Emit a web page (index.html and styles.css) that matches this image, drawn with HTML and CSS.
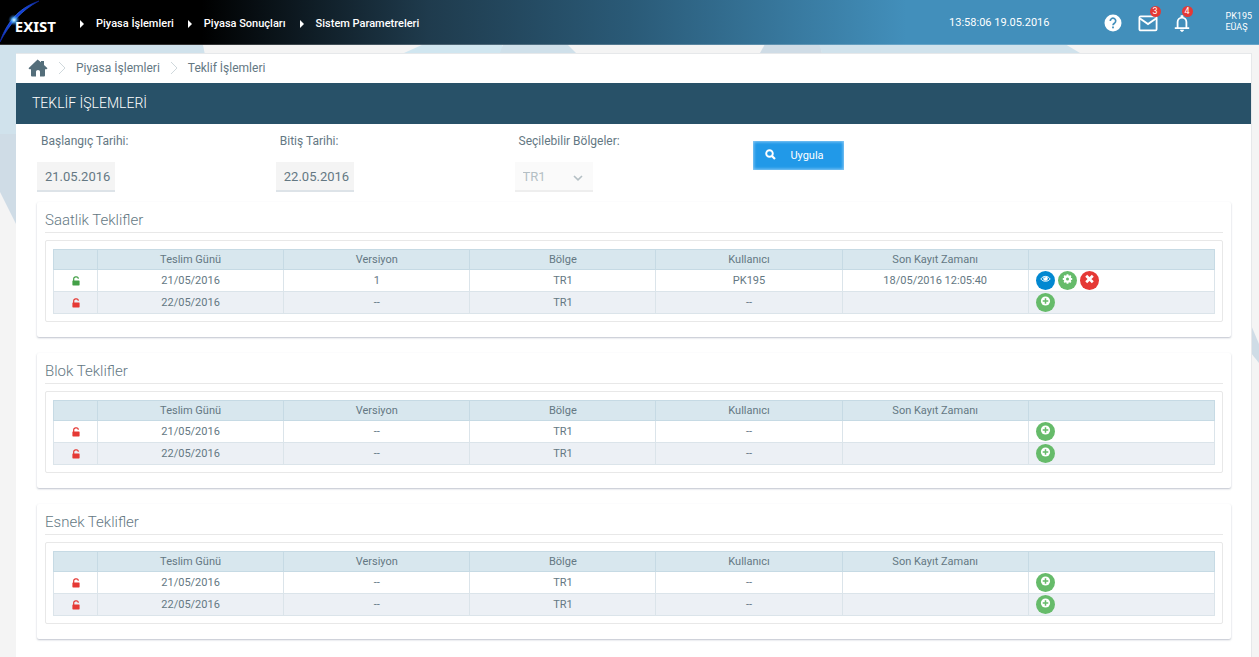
FILE: index.html
```html
<!DOCTYPE html>
<html lang="tr">
<head>
<meta charset="utf-8">
<title>Teklif İşlemleri</title>
<link rel="stylesheet" href="styles.css">
</head>
<body>
<svg class="defs" aria-hidden="true">
  <symbol id="unlock" viewBox="0 0 8 10"><path d="M1.700 5V2.800a1.900 1.900 0 0 1 1.900-1.900h.8a1.900 1.900 0 0 1 1.900 1.900" fill="none" stroke="currentColor" stroke-width="1.200"/><rect x="0.400" y="4.400" width="7.200" height="5" rx=".6" fill="currentColor"/></symbol>
  <symbol id="plus" viewBox="0 0 10 10"><circle cx="5" cy="5" r="4.600" fill="#fff"/><path d="M5 2.200v5.600M2.200 5h5.600" stroke="#66bb6a" stroke-width="1.500"/></symbol>
  <symbol id="eye" viewBox="0 0 12 10"><path d="M.9 5C3.200 1.200 8.800 1.200 11.100 5 8.800 8.300 3.200 8.300.9 5z" fill="none" stroke="#fff" stroke-width="1"/><circle cx="6" cy="4.400" r="2.500" fill="#fff"/><path d="M4.600 4.200a1.400 1.400 0 0 1 1.400-1.300" fill="none" stroke="#0288d1" stroke-width=".6"/></symbol>
  <symbol id="gear" viewBox="0 0 10 10"><circle cx="5" cy="5" r="2.600" fill="none" stroke="#fff" stroke-width="2.200"/><path d="M5 .3v2M5 7.700v2M.3 5h2M7.700 5h2M1.700 1.700l1.400 1.400M6.900 6.900l1.400 1.400M1.700 8.300l1.400-1.400M6.900 3.100l1.400-1.400" stroke="#fff" stroke-width="1.900"/></symbol>
  <symbol id="cross" viewBox="0 0 10 10"><path d="M1.700 1.700l6.600 6.600M8.300 1.700L1.700 8.300" stroke="#fff" stroke-width="2.700"/></symbol>
</svg>
<svg class="backdrop" width="1259" height="657" aria-hidden="true">
  <path d="M0 40H202L206 60 220 134H0z" fill="#d0e2ec"/>
  <path d="M0 134H17V226L0 192z" fill="#cfdce6"/>
  <path d="M404 53L424 44H502V53z" fill="#d0e6f0"/>
  <path d="M500 53L503 44H567L576 53z" fill="#cfe0ea"/>
  <path d="M760 53L765 44H820L822 53z" fill="#cfdce6"/>
  <path d="M822 53L819 44H1065L1080 53z" fill="#d0e2ec"/>
  <path d="M1251 325L1259 344V363L1251 353z" fill="#cfdce6"/>
</svg>

<header class="topbar">
  <a class="logo" href="#" aria-label="EXIST">
    <svg class="arc" viewBox="0 0 44 45" aria-hidden="true">
      <defs>
        <linearGradient id="beam" x1="0" y1="1" x2="1" y2="0"><stop offset="0" stop-color="#0a1a90"/><stop offset=".5" stop-color="#3c8cff"/><stop offset="1" stop-color="#0a1a80"/></linearGradient>
        <radialGradient id="flare"><stop offset="0" stop-color="#e8fbff"/><stop offset=".4" stop-color="#58b8ff" stop-opacity=".8"/><stop offset="1" stop-color="#1040a0" stop-opacity="0"/></radialGradient>
      </defs>
      <path d="M0 42C6 24 18 8 39 1 20 11 9 25 0 42z" fill="#1238d8" stroke="url(#beam)" stroke-width=".8"/>
      <circle cx="14" cy="20" r="6" fill="url(#flare)"/>
    </svg>
    <span class="logo-text">EXIST</span>
  </a>
  <nav class="menu">
    <a href="#">Piyasa İşlemleri</a>
    <a href="#">Piyasa Sonuçları</a>
    <a href="#">Sistem Parametreleri</a>
  </nav>
  <time class="clock">13:58:06 19.05.2016</time>
  <div class="tools">
    <button type="button" aria-label="Yardım"><svg width="18" height="18" viewBox="0 0 18 18"><circle cx="9" cy="9" r="8.500" fill="#fff"/><path d="M6.300 7a2.700 2.700 0 1 1 4.300 2.100C9.500 9.900 9 10.200 9 11.300" fill="none" stroke="#428fbb" stroke-width="1.700"/><rect x="8.100" y="12.500" width="1.800" height="1.800" fill="#428fbb"/></svg></button>
    <button type="button" aria-label="Mesajlar"><svg width="20" height="18" viewBox="0 0 20 18"><rect x="1.400" y="2.400" width="17.200" height="14" rx="1.200" fill="none" stroke="#fff" stroke-width="1.800"/><path d="M2 4.500l8 5.500 8-5.500" fill="none" stroke="#fff" stroke-width="1.900"/></svg><span class="badge">3</span></button>
    <button type="button" aria-label="Bildirimler"><svg width="16" height="18" viewBox="0 0 16 18"><path d="M3.600 14V8a4.400 4.400 0 0 1 8.800 0v6M.8 14.200h14.400" fill="none" stroke="#fff" stroke-width="1.800"/><path d="M6.900 3V1.600h2.200V3M6.200 16h3.600l-1.200 1.600H7.400z" fill="#fff" stroke="#fff" stroke-width=".6"/></svg><span class="badge">4</span></button>
  </div>
  <div class="user"><div>PK195</div><div>EÜAŞ</div></div>
</header>

<main class="page">
  <nav class="crumbs" aria-label="Konum">
    <a href="#" aria-label="Ana sayfa"><svg width="20" height="18" viewBox="0 0 20 18"><path d="M9.600.4 13 3.300V2h3v4l3.500 3.200-1 1H17V16.500q0 1-1 1H12V12.500q0-1.500-2-1.500t-2 1.500v5H4q-1 0-1-1V10.200H1.500l-1-1z" fill="#546e7a"/></svg></a>
    <svg class="sep" width="8" height="14" viewBox="0 0 8 14"><path d="M1 1l6 6-6 6" fill="none" stroke="#cfd8dc"/></svg>
    <a href="#">Piyasa İşlemleri</a>
    <svg class="sep" width="8" height="14" viewBox="0 0 8 14"><path d="M1 1l6 6-6 6" fill="none" stroke="#cfd8dc"/></svg>
    <a href="#">Teklif İşlemleri</a>
  </nav>
  <h1 class="title">TEKLİF İŞLEMLERİ</h1>

  <form class="filters">
    <div class="field"><label for="start">Başlangıç Tarihi:</label><input id="start" type="text" value="21.05.2016"></div>
    <div class="field"><label for="end">Bitiş Tarihi:</label><input id="end" type="text" value="22.05.2016"></div>
    <div class="field"><label for="zone">Seçilebilir Bölgeler:</label>
      <div class="select"><select id="zone" disabled><option>TR1</option></select><svg width="10" height="6" viewBox="0 0 10 6"><path d="M1 1l4 3.800L9 1" fill="none" stroke="#b4bfc4" stroke-width="1.600"/></svg></div></div>
    <div class="field"><button class="apply" type="button"><svg width="11" height="13" viewBox="0 0 11 13"><circle cx="4.500" cy="4.500" r="3.300" fill="none" stroke="#fff" stroke-width="1.900"/><path d="M7 7l3 3" stroke="#fff" stroke-width="2.200"/></svg><span>Uygula</span></button></div>
  </form>

  <section class="card">
    <h2>Saatlik Teklifler</h2>
    <div class="frame">
      <table>
        <thead><tr><th class="state"></th><th>Teslim Günü</th><th>Versiyon</th><th>Bölge</th><th>Kullanıcı</th><th>Son Kayıt Zamanı</th><th></th></tr></thead>
        <tbody>
          <tr><td><svg class="lock open"><use href="#unlock"/></svg></td><td>21/05/2016</td><td>1</td><td>TR1</td><td>PK195</td><td>18/05/2016 12:05:40</td><td><div class="actions"><button class="act view" type="button" aria-label="Görüntüle"><svg><use href="#eye"/></svg></button><button class="act" type="button" aria-label="Düzenle"><svg><use href="#gear"/></svg></button><button class="act remove" type="button" aria-label="Sil"><svg><use href="#cross"/></svg></button></div></td></tr>
          <tr><td><svg class="lock"><use href="#unlock"/></svg></td><td>22/05/2016</td><td>--</td><td>TR1</td><td>--</td><td></td><td><div class="actions"><button class="act" type="button" aria-label="Ekle"><svg><use href="#plus"/></svg></button></div></td></tr>
        </tbody>
      </table>
    </div>
  </section>

  <section class="card">
    <h2>Blok Teklifler</h2>
    <div class="frame">
      <table>
        <thead><tr><th class="state"></th><th>Teslim Günü</th><th>Versiyon</th><th>Bölge</th><th>Kullanıcı</th><th>Son Kayıt Zamanı</th><th></th></tr></thead>
        <tbody>
          <tr><td><svg class="lock"><use href="#unlock"/></svg></td><td>21/05/2016</td><td>--</td><td>TR1</td><td>--</td><td></td><td><div class="actions"><button class="act" type="button" aria-label="Ekle"><svg><use href="#plus"/></svg></button></div></td></tr>
          <tr><td><svg class="lock"><use href="#unlock"/></svg></td><td>22/05/2016</td><td>--</td><td>TR1</td><td>--</td><td></td><td><div class="actions"><button class="act" type="button" aria-label="Ekle"><svg><use href="#plus"/></svg></button></div></td></tr>
        </tbody>
      </table>
    </div>
  </section>

  <section class="card">
    <h2>Esnek Teklifler</h2>
    <div class="frame">
      <table>
        <thead><tr><th class="state"></th><th>Teslim Günü</th><th>Versiyon</th><th>Bölge</th><th>Kullanıcı</th><th>Son Kayıt Zamanı</th><th></th></tr></thead>
        <tbody>
          <tr><td><svg class="lock"><use href="#unlock"/></svg></td><td>21/05/2016</td><td>--</td><td>TR1</td><td>--</td><td></td><td><div class="actions"><button class="act" type="button" aria-label="Ekle"><svg><use href="#plus"/></svg></button></div></td></tr>
          <tr><td><svg class="lock"><use href="#unlock"/></svg></td><td>22/05/2016</td><td>--</td><td>TR1</td><td>--</td><td></td><td><div class="actions"><button class="act" type="button" aria-label="Ekle"><svg><use href="#plus"/></svg></button></div></td></tr>
        </tbody>
      </table>
    </div>
  </section>
</main>
</body>
</html>
```
FILE: styles.css
```css
* { box-sizing: border-box; }
body {
  margin: 0;
  min-height: 100vh;
  display: flex;
  flex-direction: column;
  background: #f4f4f4;
  color: #647883;
  font-family: Roboto, "Open Sans", sans-serif;
  font-size: 11px;
}
a { color: inherit; text-decoration: none; }
button { border: 0; padding: 0; font: inherit; color: inherit; background: none; }
svg { display: block; flex: none; }
.defs { position: absolute; width: 0; height: 0; }
.backdrop { position: absolute; top: 0; left: 0; z-index: -1; }

.topbar {
  height: 45px;
  display: flex;
  align-items: center;
  color: #fff;
  background: linear-gradient(90deg, #000 16%, #1f3b4d 34%, #2a5a77 50%, #428fbb 72%);
  border-bottom: 1px solid rgba(255, 255, 255, .2);
}
.logo { position: relative; width: 56px; height: 44px; flex: none; display: flex; align-items: center; justify-content: flex-end; padding-top: 8px; }
.arc { position: absolute; left: 0; top: 0; width: 44px; height: 45px; }
.logo-text { position: relative; font: 700 15px/16px "Noto Sans", sans-serif; }
.menu { display: flex; gap: 14px; margin-left: 24px; flex: 1; font-weight: 500; padding-top: 3px; }
.menu a { display: flex; align-items: center; }
.menu a::before { content: ""; border: solid transparent; border-width: 4px 0 4px 4px; border-left-color: #fff; margin-right: 12px; }
.clock { font-size: 11px; }
.tools { display: flex; align-items: center; gap: 16px; margin-left: 54px; padding-top: 2px; }
.tools button { position: relative; }
.badge { position: absolute; right: -3px; top: -8px; width: 11px; height: 11px; border-radius: 50%; background: #e53935; color: #fff; font-size: 9px; line-height: 11px; text-align: center; }
.user { margin: 0 7px 0 36px; line-height: 11px; font-size: 9px; }

.page { flex: 1; margin: 8px 7px 0 16px; background: #fff; border: 1px solid #e6e8ea; border-width: 1px 1px 0 0; padding-bottom: 17px; }
.crumbs { height: 29px; display: flex; align-items: center; gap: 10px; padding: 0 0 1px 12px; font-size: 12px; }
.title { margin: 0; padding-left: 16px; height: 41px; background: #285168; color: #fff; font-size: 14px; font-weight: 300; line-height: 41px; }

.filters { display: grid; grid-template-columns: repeat(5, 1fr); padding: 9px 20px 0 21px; height: 78px; }
.field label { display: block; padding-left: 4px; font-size: 12px; line-height: 16px; margin-bottom: 13px; }
.field input, .select select {
  width: 78px; height: 30px; padding: 0 0 0 8px; border: 0; border-bottom: 2px solid #dde3e8; border-radius: 0;
  background: #f4f4f4; color: #647883; font: 13px Roboto, sans-serif;
}
.select { position: relative; width: 78px; }
.select select { appearance: none; background: #fafafa; color: #b4bfc4; border-bottom-color: #eee; opacity: 1; }
.select svg { position: absolute; right: 10px; top: 13px; }
.apply { display: flex; align-items: center; gap: 14px; width: 91px; height: 29px; margin-top: 8px; padding-left: 12px; background: #2199e8; box-shadow: inset 0 0 3px 1px #8ccaf5; color: #fff; }

.card { margin: 0 20px 16px 21px; padding: 9px 8px 15px; border-radius: 2px; background: #fff; box-shadow: 0 1px 2px rgba(70, 80, 110, .35); }
.card h2 { margin: 0 0 7px; height: 22px; font-size: 15px; font-weight: 300; line-height: 18px; border-bottom: 1px solid #e8e8e8; }
.frame { border: 1px solid #e8e8e8; padding: 8px 7px 7px; border-radius: 2px; }
table { width: 100%; table-layout: fixed; border-collapse: collapse; text-align: center; }
th, td { padding: 0; border: 1px solid #dbe4ea; height: 22px; line-height: 14px; }
th { height: 20px; background: #d8e7ee; border-color: #c6dae4; font-weight: 400; }
th.state { width: 44px; }
tbody tr:nth-child(even) { background: #ecf0f5; }
.lock { width: 8px; height: 10px; margin: 0 auto; color: #e53935; }
.lock.open { color: #43a047; }
.actions { display: flex; gap: 3px; padding-left: 7px; }
.act { width: 19px; height: 19px; border-radius: 50%; background: #66bb6a; display: flex; justify-content: center; align-items: flex-start; padding-top: 3px; }
.act svg { width: 11px; height: 10px; }
.act.view { background: #0288d1; }
.act.remove { background: #e53935; }
```
